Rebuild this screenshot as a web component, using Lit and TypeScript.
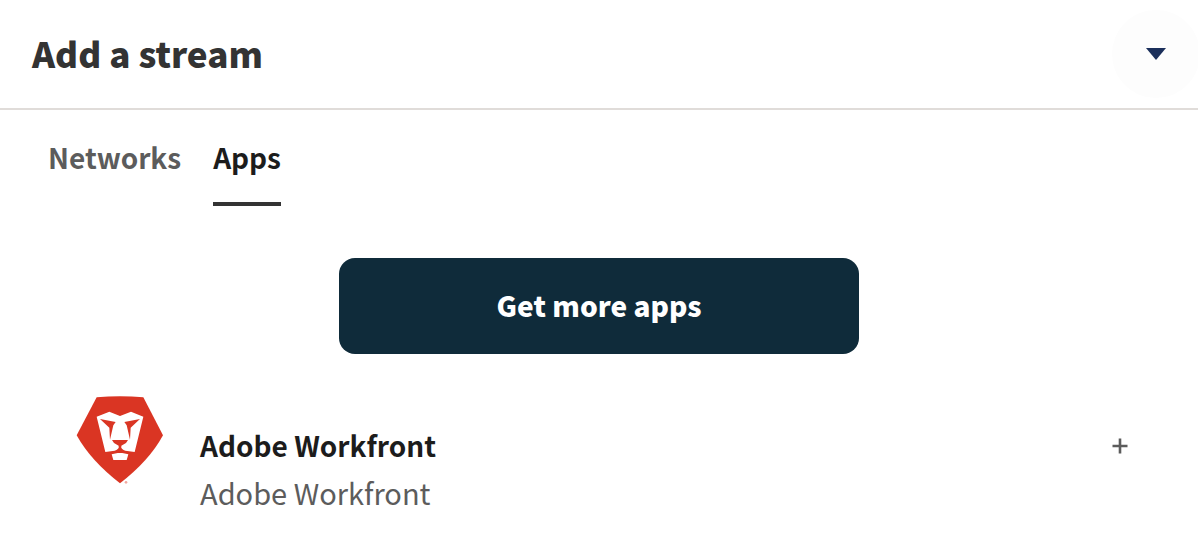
import { LitElement, html, css, svg } from "lit";
import { customElement, state } from "lit/decorators.js";

const workfrontLogo = svg`
  <path fill="#da3523" d="M80 28 Q150 21 220 28 L279 142 Q238 218 150 286 Q62 218 20 142 Z"/>
  <path fill="#fff" d="M80 86 L118 71 L150 84 L183 71 L220 86 L194 192 L166 188 Q154 184 153 176 L147 176 Q146 184 134 188 L106 192 Z"/>
  <path fill="#da3523" d="M90 93 L137 102 L130 112 L120 155 L118 119 Z M210 93 L163 102 L170 112 L180 155 L182 119 Z"/>
  <path fill="#da3523" d="M126 156 L174 156 L168 165 L154 173 L154 178 L146 178 L146 173 L132 165 Z"/>
  <path fill="#fff" d="M125 199 L143 195 L157 195 L175 199 L170 216 L130 216 Z"/>
  <circle cx="168" cy="283" r="4" fill="#f0a8a0"/>`;

interface StreamApp {
  name: string;
  description: string;
}

@customElement("app-root")
export class AppRoot extends LitElement {
  @state() private tab = "Apps";

  private tabs = ["Networks", "Apps"];
  private apps: StreamApp[] = [{ name: "Adobe Workfront", description: "Adobe Workfront" }];

  static styles = css`
    :host {
      display: block;
      background: #fff;
      color: #1c1c1c;
      font-family: "Source Sans Pro", "Noto Sans CJK JP", sans-serif;
      font-size: 28px;
      line-height: 46px;
    }
    * {
      box-sizing: border-box;
    }
    button {
      margin: 0;
      padding: 0;
      border: 0;
      background: none;
      font: inherit;
      color: inherit;
      cursor: pointer;
    }
    svg {
      display: block;
    }
    .header {
      display: flex;
      align-items: center;
      justify-content: space-between;
      height: 110px;
      padding-left: 32px;
      border-bottom: 2px solid #e0dcd9;
    }
    h1 {
      margin: 0;
      padding-bottom: 2px;
      font-size: 35px;
      font-weight: 900;
      color: #333;
    }
    .toggle {
      display: grid;
      place-items: center;
      width: 88px;
      height: 88px;
      margin-right: -2px;
      border-radius: 50%;
      background: #fdfdfd;
    }
    .page {
      overflow: hidden;
    }
    .tabs {
      display: flex;
      gap: 32px;
      padding: 24px 48px 0;
    }
    .tab {
      height: 72px;
      padding-bottom: 22px;
      border-bottom: 4px solid transparent;
      font-weight: 700;
      color: #5c5c5c;
    }
    .tab.active {
      border-color: #333;
      color: #1c1c1c;
    }
    .more {
      display: block;
      width: 520px;
      max-width: 90%;
      height: 96px;
      margin: 52px auto 0;
      padding-bottom: 2px;
      border-radius: 16px;
      background: #0f2b3a;
      color: #fff;
      font-weight: 900;
    }
    .list {
      margin: 0;
      padding: 34px 70px 32px;
      list-style: none;
    }
    .item {
      display: flex;
      align-items: flex-start;
    }
    .text {
      flex: 1;
      padding: 34px 0 0 30px;
    }
    .name {
      margin: 0;
      font-size: inherit;
      font-weight: 700;
    }
    .description {
      margin: 0;
      font-size: 29px;
      line-height: 48px;
      color: #5c5c5c;
    }
    .add {
      display: grid;
      place-items: center;
      width: 16px;
      height: 48px;
      margin-top: 34px;
    }
  `;

  render() {
    return html`
      <div class="page">
        <header class="header">
          <h1>Add a stream</h1>
          <button class="toggle" aria-label="Collapse">
            <svg width="20" height="12" viewBox="0 0 20 12"><path d="M0 0H20L10 12Z" fill="#1b2f5b" /></svg>
          </button>
        </header>
        <nav class="tabs" role="tablist">
          ${this.tabs.map(
            (t) => html`<button
              class="tab ${t === this.tab ? "active" : ""}"
              role="tab"
              aria-selected=${t === this.tab}
              @click=${() => (this.tab = t)}
            >${t}</button>`
          )}
        </nav>
        <button class="more">Get more apps</button>
        <ul class="list">
          ${this.apps.map(
            (a) => html`<li class="item">
              <svg width="100" height="104" viewBox="0 0 300 312" aria-hidden="true">${workfrontLogo}</svg>
              <div class="text">
                <h2 class="name">${a.name}</h2>
                <p class="description">${a.description}</p>
              </div>
              <button class="add" aria-label="Add ${a.name}">
                <svg width="16" height="16" viewBox="0 0 16 16">
                  <path d="M8 0.5V15.5M0.5 8H15.5" stroke="#5c5c5c" stroke-width="2.6" />
                </svg>
              </button>
            </li>`
          )}
        </ul>
      </div>
    `;
  }
}
